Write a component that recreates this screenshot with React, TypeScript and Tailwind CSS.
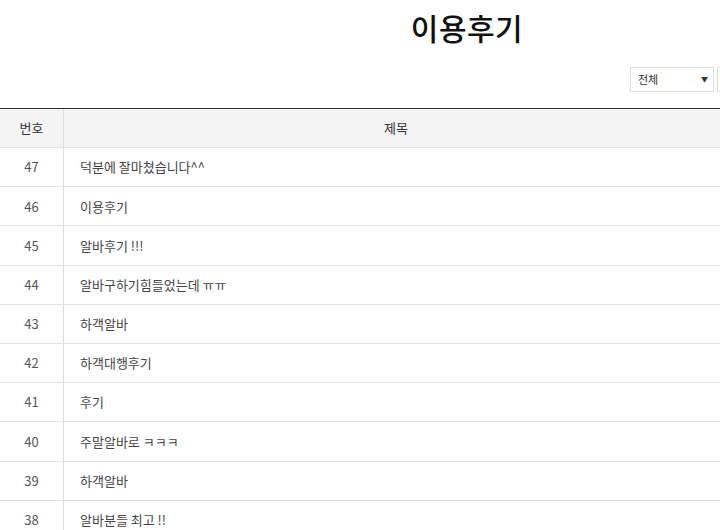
import React from "react";

const rows: [number, string][] = [
  [47, "덕분에 잘마쳤습니다^^"],
  [46, "이용후기"],
  [45, "알바후기 !!!"],
  [44, "알바구하기힘들었는데 ㅠㅠ"],
  [43, "하객알바"],
  [42, "하객대행후기"],
  [41, "후기"],
  [40, "주말알바로 ㅋㅋㅋ"],
  [39, "하객알바"],
  [38, "알바분들 최고 !!"],
];

export default function App() {
  return (
    <div
      className="w-[720px] h-[530px] overflow-hidden bg-white"
      style={{ fontFamily: '"Noto Sans CJK KR", "Noto Sans", sans-serif' }}
    >
      <div className="w-[934px]">
        <div className="h-[54px] flex items-center justify-center">
          <h1 className="text-[30px] leading-none font-medium text-[#111] tracking-[0.5px]">이용후기</h1>
        </div>
        <div className="flex justify-end gap-[3px] pt-[13px] h-[54px]">
          <div className="w-[84px] h-[25px] border border-[#ddd] flex items-center justify-between pl-[7px] pr-[5px] text-[11px] text-[#333]">
            <span>전체</span>
            <span className="text-[7px] text-[#333]">▼</span>
          </div>
          <div className="w-[144px] h-[25px] border border-[#ddd]" />
          <div className="w-[60px] h-[25px] border border-[#ddd] mr-[10px]" />
        </div>
        <div className="border-t border-[#333]">
          <div className="flex h-[39px] bg-[#f4f4f4] border-b border-[#e3e3e3] text-[13px] text-[#333]">
            <div className="w-[64px] flex items-center justify-center border-r border-[#ddd]">번호</div>
            <div className="w-[664px] flex items-center justify-center">제목</div>
            <div className="flex-1" />
          </div>
          {rows.map(([n, t]) => (
            <div key={n} className="flex h-[39.2px] border-b border-[#e3e3e3] text-[13px] text-[#555]">
              <div className="w-[64px] flex items-center justify-center border-r border-[#ddd]">{n}</div>
              <div className="w-[664px] flex items-center pl-[16px] text-[#444]">{t}</div>
              <div className="flex-1" />
            </div>
          ))}
        </div>
      </div>
    </div>
  );
}
